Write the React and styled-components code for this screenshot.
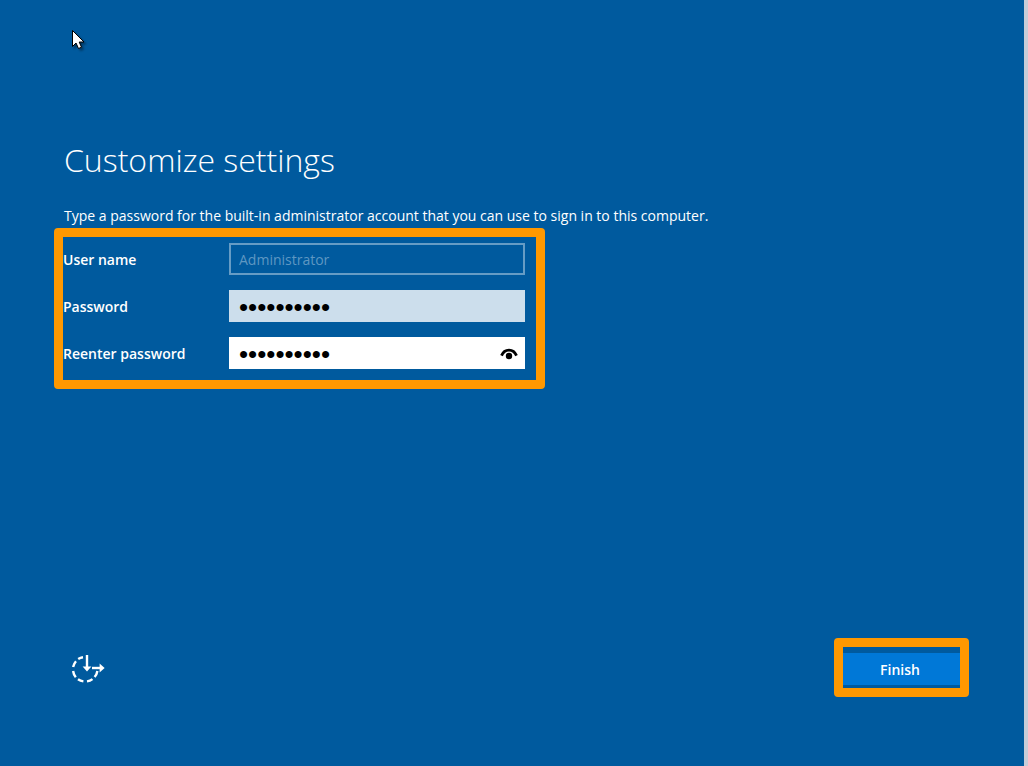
import { useState } from "react";
import styled, { createGlobalStyle } from "styled-components";

const GlobalStyle = createGlobalStyle`
    * {
        box-sizing: border-box;
    }

    body {
        margin: 0;
        background: #005a9e;
        color: #fff;
        font-family: "Open Sans", "Noto Sans", sans-serif;
        font-size: 14px;
    }
`;

const Screen = styled.div`
    display: flex;
    flex-direction: column;
    min-height: 100vh;
    padding: 136px 55px 69px 54px;
    border-right: 4px solid #c8ccd8;
`;

const Title = styled.h1`
    margin: 0;
    padding-left: 10px;
    font-size: 32px;
    font-weight: 300;
    line-height: 48px;
`;

const Description = styled.p`
    margin: 20px 0 0;
    padding-left: 10px;
    line-height: 24px;
`;

// orange marker around a part of the screen
const Highlight = styled.div`
    align-self: flex-start;
    padding: ${({ $padding }) => $padding};
    border: 9px solid #ff9800;
    border-radius: 4px;
`;

const Fields = styled.div`
    display: flex;
    flex-direction: column;
    gap: 15px;
`;

const Row = styled.div`
    display: grid;
    grid-template-columns: 166px 296px;
    align-items: center;
`;

const Label = styled.label`
    padding-top: 2px;
    font-weight: 600;
    line-height: 20px;
`;

const InputBox = styled.div`
    display: flex;
    align-items: center;
    height: 32px;
    padding: 0 8px;
    border: 2px solid ${({ $border }) => $border};
    background: ${({ $background }) => $background};
`;

const Input = styled.input`
    flex: 1;
    min-width: 0;
    height: 28px;
    padding: 0;
    border: 0;
    outline: 0;
    background: transparent;
    color: #000;
    font-family: "Open Sans", "Noto Sans", sans-serif;
    font-size: 14px;

    &:disabled {
        color: #5e97c2;
    }

    &[type="password"] {
        padding-top: 2px;
        font-family: "Liberation Sans", sans-serif;
        font-size: 26px;
    }
`;

const RevealButton = styled.button`
    display: flex;
    margin-right: -3px;
    padding: 2px 0 0;
    border: 0;
    background: transparent;
    color: #000;
`;

const Footer = styled.footer`
    display: flex;
    align-items: center;
    justify-content: space-between;
    margin-top: auto;
`;

const EaseButton = styled.button`
    display: flex;
    margin-left: 17px;
    padding: 2px 0 0;
    border: 0;
    background: transparent;
    color: #fff;
`;

const FinishButton = styled.button`
    display: block;
    width: 117px;
    height: 32px;
    padding: 0 3px 0 0;
    border: 0;
    background: #0078d7;
    color: #fff;
    font-family: "Open Sans", "Noto Sans", sans-serif;
    font-size: 14px;
    font-weight: 600;
`;

const Pointer = styled.svg`
    position: absolute;
    top: 30px;
    left: 72px;
    filter: drop-shadow(2px 2px 1px rgba(0, 0, 0, 0.4));
    pointer-events: none;
`;

const EyeIcon = () => (
    <svg width="18" height="14" viewBox="0 0 18 14" aria-hidden="true">
        <path d="M1.5 8.6C4.5 1.2 13.5 1.2 16.5 8.6" fill="none" stroke="currentColor" strokeWidth="2.8" />
        <circle cx="9" cy="9" r="3.2" fill="currentColor" />
    </svg>
);

const EaseOfAccessIcon = () => (
    <svg width="34" height="32" viewBox="0 0 34 32" fill="none" stroke="currentColor" strokeWidth="2.4" aria-hidden="true">
        <path d="M12 4.2A12.2 12.2 0 0 0 7.2 6M5 8.2A12 12 0 0 0 2.1 14M2.1 18A12 12 0 0 0 4.8 24.2M7 26.2A12 12 0 0 0 12.4 28.4M16 28.4A12 12 0 0 0 21.5 26.1M23.6 24A12 12 0 0 0 26.4 18" />
        <path d="M16 2V15" />
        <path d="M21 15H31" />
        <path d="M11.6 13.6H20.4L16 18.6Z" fill="currentColor" stroke="none" />
        <path d="M28.6 10.6L33.6 15L28.6 19.4Z" fill="currentColor" stroke="none" />
    </svg>
);

const App = () => {

    const [password, setPassword] = useState("1234567890");
    const [confirm, setConfirm] = useState("1234567890");
    const [reveal, setReveal] = useState(false);

    return (
        <>
            <GlobalStyle />
            <Screen>
                <Title>Customize settings</Title>
                <Description>
                    Type a password for the built-in administrator account that you can use to sign in to this computer.
                </Description>

                <Highlight $padding="6px 11px 11px 0">
                    <Fields>
                        <Row>
                            <Label htmlFor="username">User name</Label>
                            <InputBox $border="#669cc5" $background="transparent">
                                <Input id="username" type="text" value="Administrator" disabled />
                            </InputBox>
                        </Row>
                        <Row>
                            <Label htmlFor="password">Password</Label>
                            <InputBox $border="#ccdeec" $background="#ccdeec">
                                <Input
                                    id="password"
                                    type="password"
                                    value={password}
                                    onChange={(e) => setPassword(e.target.value)}
                                />
                            </InputBox>
                        </Row>
                        <Row>
                            <Label htmlFor="confirm">Reenter password</Label>
                            <InputBox $border="#fff" $background="#fff">
                                <Input
                                    id="confirm"
                                    type={reveal ? "text" : "password"}
                                    value={confirm}
                                    onChange={(e) => setConfirm(e.target.value)}
                                />
                                <RevealButton type="button" aria-label="Show password" onClick={() => setReveal(!reveal)}>
                                    <EyeIcon />
                                </RevealButton>
                            </InputBox>
                        </Row>
                    </Fields>
                </Highlight>

                <Footer>
                    <EaseButton type="button" aria-label="Ease of access">
                        <EaseOfAccessIcon />
                    </EaseButton>
                    <Highlight $padding="6px 0 3px">
                        <FinishButton type="button">Finish</FinishButton>
                    </Highlight>
                </Footer>
            </Screen>

            <Pointer width="14" height="21" viewBox="0 0 14 21" aria-hidden="true">
                <path d="M0.5 0.5V16.5L4 13L6.5 18.5L9.5 17.2L7.2 12H12Z" fill="#fff" stroke="#000" />
            </Pointer>
        </>
    );
};

export default App;
